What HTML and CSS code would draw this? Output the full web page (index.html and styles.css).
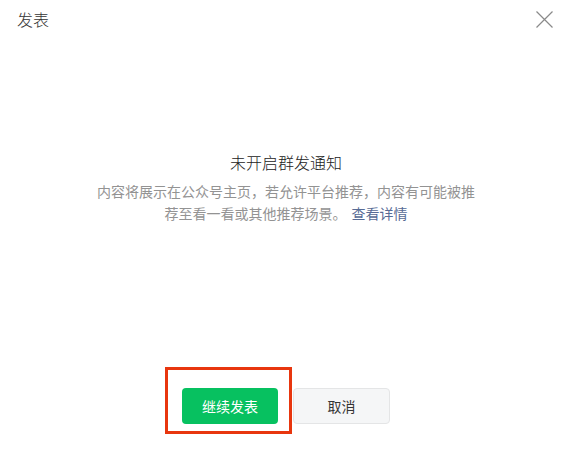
FILE: index.html
```html
<!DOCTYPE html>
<html lang="zh-CN">
<head>
    <meta charset="UTF-8">
    <title>发表</title>
    <link rel="stylesheet" href="styles.css">
</head>
<body>
    <div class="dialog">
        <div class="dialogHd">
            <span class="dialogTitle">发表</span>
            <span class="dialogClose">
                <svg width="17" height="17" viewBox="0 0 17 17">
                    <path d="M0.5 0.5 L16.5 16.5 M16.5 0.5 L0.5 16.5" stroke="#8a8a8a" stroke-width="1.2" fill="none"/>
                </svg>
            </span>
        </div>
        <div class="dialogBd">
            <h3 class="tipTitle">未开启群发通知</h3>
            <p class="tipDesc">内容将展示在公众号主页，若允许平台推荐，内容有可能被推荐至看一看或其他推荐场景。<a href="#" class="link">查看详情</a></p>
        </div>
        <div class="dialogFt">
            <span class="mark"><button class="btn btnPrimary">继续发表</button></span>
            <button class="btn btnDefault">取消</button>
        </div>
    </div>
</body>
</html>
```

FILE: styles.css
```css
*{
    box-sizing: border-box;
}
body{
    margin: 0;
    background: #fff;
    font-family: "Noto Sans CJK SC", "Noto Sans", sans-serif;
    font-weight: 300;
    color: #353535;
}
.dialog{
    width: 572px;
    height: 450px;
    display: flex;
    flex-direction: column;
}
.dialogHd{
    height: 37px;
    padding: 0 19px 0 17px;
    display: flex;
    align-items: center;
    justify-content: space-between;
}
.dialogTitle{
    font-size: 16px;
    color: #353535;
}
.dialogClose{
    display: flex;
    margin-top: 1px;
}
.dialogBd{
    flex: 1;
    padding-top: 113px;
    text-align: center;
}
.tipTitle{
    margin: 0 0 6px;
    font-size: 16px;
    font-weight: 300;
    line-height: 24px;
    color: #222;
}
.tipDesc{
    width: 386px;
    margin: 0 auto;
    font-size: 14px;
    font-weight: 400;
    line-height: 22px;
    color: #939393;
}
.link{
    margin-left: 5px;
    color: #576b95;
    text-decoration: none;
}
.dialogFt{
    display: flex;
    justify-content: center;
    gap: 15px;
    padding-bottom: 26px;
}
.btn{
    width: 96px;
    height: 36px;
    border-radius: 4px;
    font-family: inherit;
    font-size: 14px;
    font-weight: 400;
    padding: 0;
    cursor: pointer;
}
.btnPrimary{
    background: #07c160;
    border: none;
    color: #fff;
    display: block;
}
.btnDefault{
    background: #f5f6f7;
    border: 1px solid #e4e5e6;
    color: #353535;
    width: 97px;
}
.mark{
    position: relative;
    display: block;
}
.mark::after{
    content: "";
    position: absolute;
    left: -17px;
    top: -21px;
    right: -14px;
    bottom: -10px;
    border: 3px solid #e8360e;
}
```
